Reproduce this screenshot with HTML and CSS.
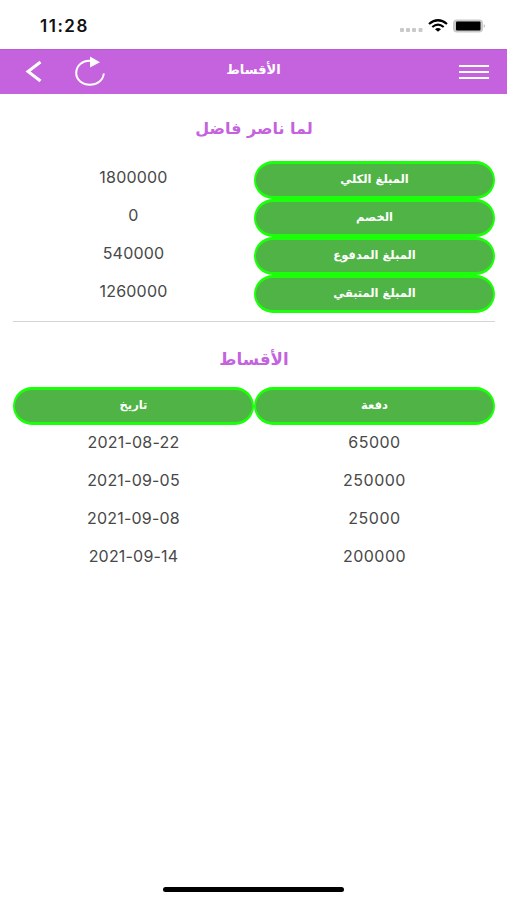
FILE: index.html
```html
<!DOCTYPE html>
<html lang="ar" dir="rtl">
<head>
    <meta charset="UTF-8">
    <meta name="viewport" content="width=device-width, initial-scale=1.0">
    <title>الأقساط</title>
    <link rel="stylesheet" href="styles.css">
</head>
<body>
    <div class="status-bar" dir="ltr">
        <span class="time">11:28</span>
        <svg class="status-icons" width="90" height="20" viewBox="0 0 90 20">
            <g fill="#c9c9c9">
                <rect x="2" y="12" width="4" height="4" rx="1"/>
                <rect x="8" y="12" width="4" height="4" rx="1"/>
                <rect x="14" y="12" width="4" height="4" rx="1"/>
                <rect x="20.500" y="12" width="4" height="4" rx="1"/>
            </g>
            <g fill="none" stroke="#000" stroke-width="2.200">
                <path d="M31 8Q40 .5 49 8"/>
                <path d="M34.300 11Q40 6.300 45.700 11"/>
            </g>
            <path d="M37 13.200Q40 11 43 13.200L40 15.800Z"/>
            <rect x="55" y="3.500" width="30" height="13" rx="4" fill="#c9c9c9"/>
            <rect x="58" y="5.500" width="24.500" height="9" rx="1"/>
            <path d="M85.800 8Q87.800 10 85.800 12Z" fill="#aaa"/>
        </svg>
    </div>

    <header class="navbar" dir="ltr">
        <div class="nav-left">
            <svg width="18" height="24" viewBox="0 0 18 24">
                <path d="M15.500 2L3 11.500L15.500 21" fill="none" stroke="#fff" stroke-width="3"/>
            </svg>
            <svg class="reload" width="32" height="32" viewBox="0 0 32 32">
                <path d="M17 5C9 4 2.200 9.500 2.200 17C2.200 24 8.500 28.800 16 28.800C23 28.800 29 24.500 29.800 17.500" fill="none" stroke="#fff" stroke-width="2"/>
                <path d="M16 .5L26 6.300L16 11.500Z" fill="#fff"/>
            </svg>
        </div>
        <h1 dir="rtl">الأقساط</h1>
        <div class="menu">
            <span></span>
            <span></span>
            <span></span>
        </div>
    </header>

    <main>
        <h2 class="student">لما ناصر فاضل</h2>
        <div class="summary">
            <div class="pill">المبلغ الكلي</div>
            <div class="value">1800000</div>
            <div class="pill">الخصم</div>
            <div class="value">0</div>
            <div class="pill">المبلغ المدفوع</div>
            <div class="value">540000</div>
            <div class="pill">المبلغ المتبقي</div>
            <div class="value">1260000</div>
        </div>

        <h2 class="section-title">الأقساط</h2>
        <div class="payments">
            <div class="pill">دفعة</div>
            <div class="pill">تاريخ</div>
            <div class="value amount">65000</div>
            <div class="value" dir="ltr">2021-08-22</div>
            <div class="value amount">250000</div>
            <div class="value" dir="ltr">2021-09-05</div>
            <div class="value amount">25000</div>
            <div class="value" dir="ltr">2021-09-08</div>
            <div class="value amount">200000</div>
            <div class="value" dir="ltr">2021-09-14</div>
        </div>
    </main>

    <div class="home-indicator"></div>
</body>
</html>
```
FILE: styles.css
```css
* {
    box-sizing: border-box;
}

body {
    margin: 0;
    height: 900px;
    display: flex;
    flex-direction: column;
    background: #fff;
    color: #484848;
    font-family: Inter, "DejaVu Sans", sans-serif;
    overflow: hidden;
}

.status-bar {
    height: 49px;
    padding: 16px 19px 0 40px;
    display: flex;
    justify-content: space-between;
    align-items: flex-start;
}

.time {
    color: #111;
    font-size: 17px;
    font-weight: 600;
    line-height: 20px;
    letter-spacing: 1.5px;
}

.navbar {
    height: 45px;
    padding: 0 18px 0 25px;
    display: grid;
    grid-template-columns: 1fr auto 1fr;
    align-items: center;
    background: #c562dd;
    border-top: 1px solid #b95ad0;
    color: #fff;
}

.nav-left {
    display: flex;
    align-items: center;
    gap: 31px;
}

.navbar h1 {
    margin: 0 7px 4px 0;
    font-family: "DejaVu Sans", sans-serif;
    font-size: 13px;
    line-height: 20px;
}

.menu {
    justify-self: end;
    width: 30px;
    display: flex;
    flex-direction: column;
    gap: 4px;
    margin-bottom: 1px;
}

.menu span {
    height: 2px;
    background: #fff;
}

main {
    flex: 1;
    padding: 0 12px 0 13px;
}

h2 {
    margin: 0;
    color: #c562dd;
    font-family: "DejaVu Sans", sans-serif;
    font-size: 16px;
    line-height: 24px;
    text-align: center;
}

.student {
    padding-top: 23px;
    height: 67px;
}

.section-title {
    padding-top: 26px;
    height: 65px;
    font-size: 16.6px;
}

.summary,
.payments {
    display: grid;
    grid-template-columns: 1fr 1fr;
    grid-auto-rows: 38.1px;
}

.summary {
    height: 161px;
    border-bottom: 1px solid #d5d5d5;
}

.pill {
    display: flex;
    justify-content: center;
    align-items: center;
    padding-bottom: 3px;
    background: #4fb345;
    border: solid #1cff0b;
    border-width: 3px 2px;
    border-radius: 20px;
    color: #fff;
    font-family: "DejaVu Sans", sans-serif;
    font-size: 11.5px;
    font-weight: bold;
}

.value {
    padding-top: 6px;
    font-size: 16px;
    line-height: 20px;
    letter-spacing: 0.2px;
    text-align: center;
}

.payments .value {
    padding-top: 7px;
}

.amount {
    letter-spacing: 0.5px;
}

.home-indicator {
    align-self: center;
    width: 181px;
    height: 5px;
    margin-bottom: 8px;
    background: #000;
    border-radius: 3px;
}
```
